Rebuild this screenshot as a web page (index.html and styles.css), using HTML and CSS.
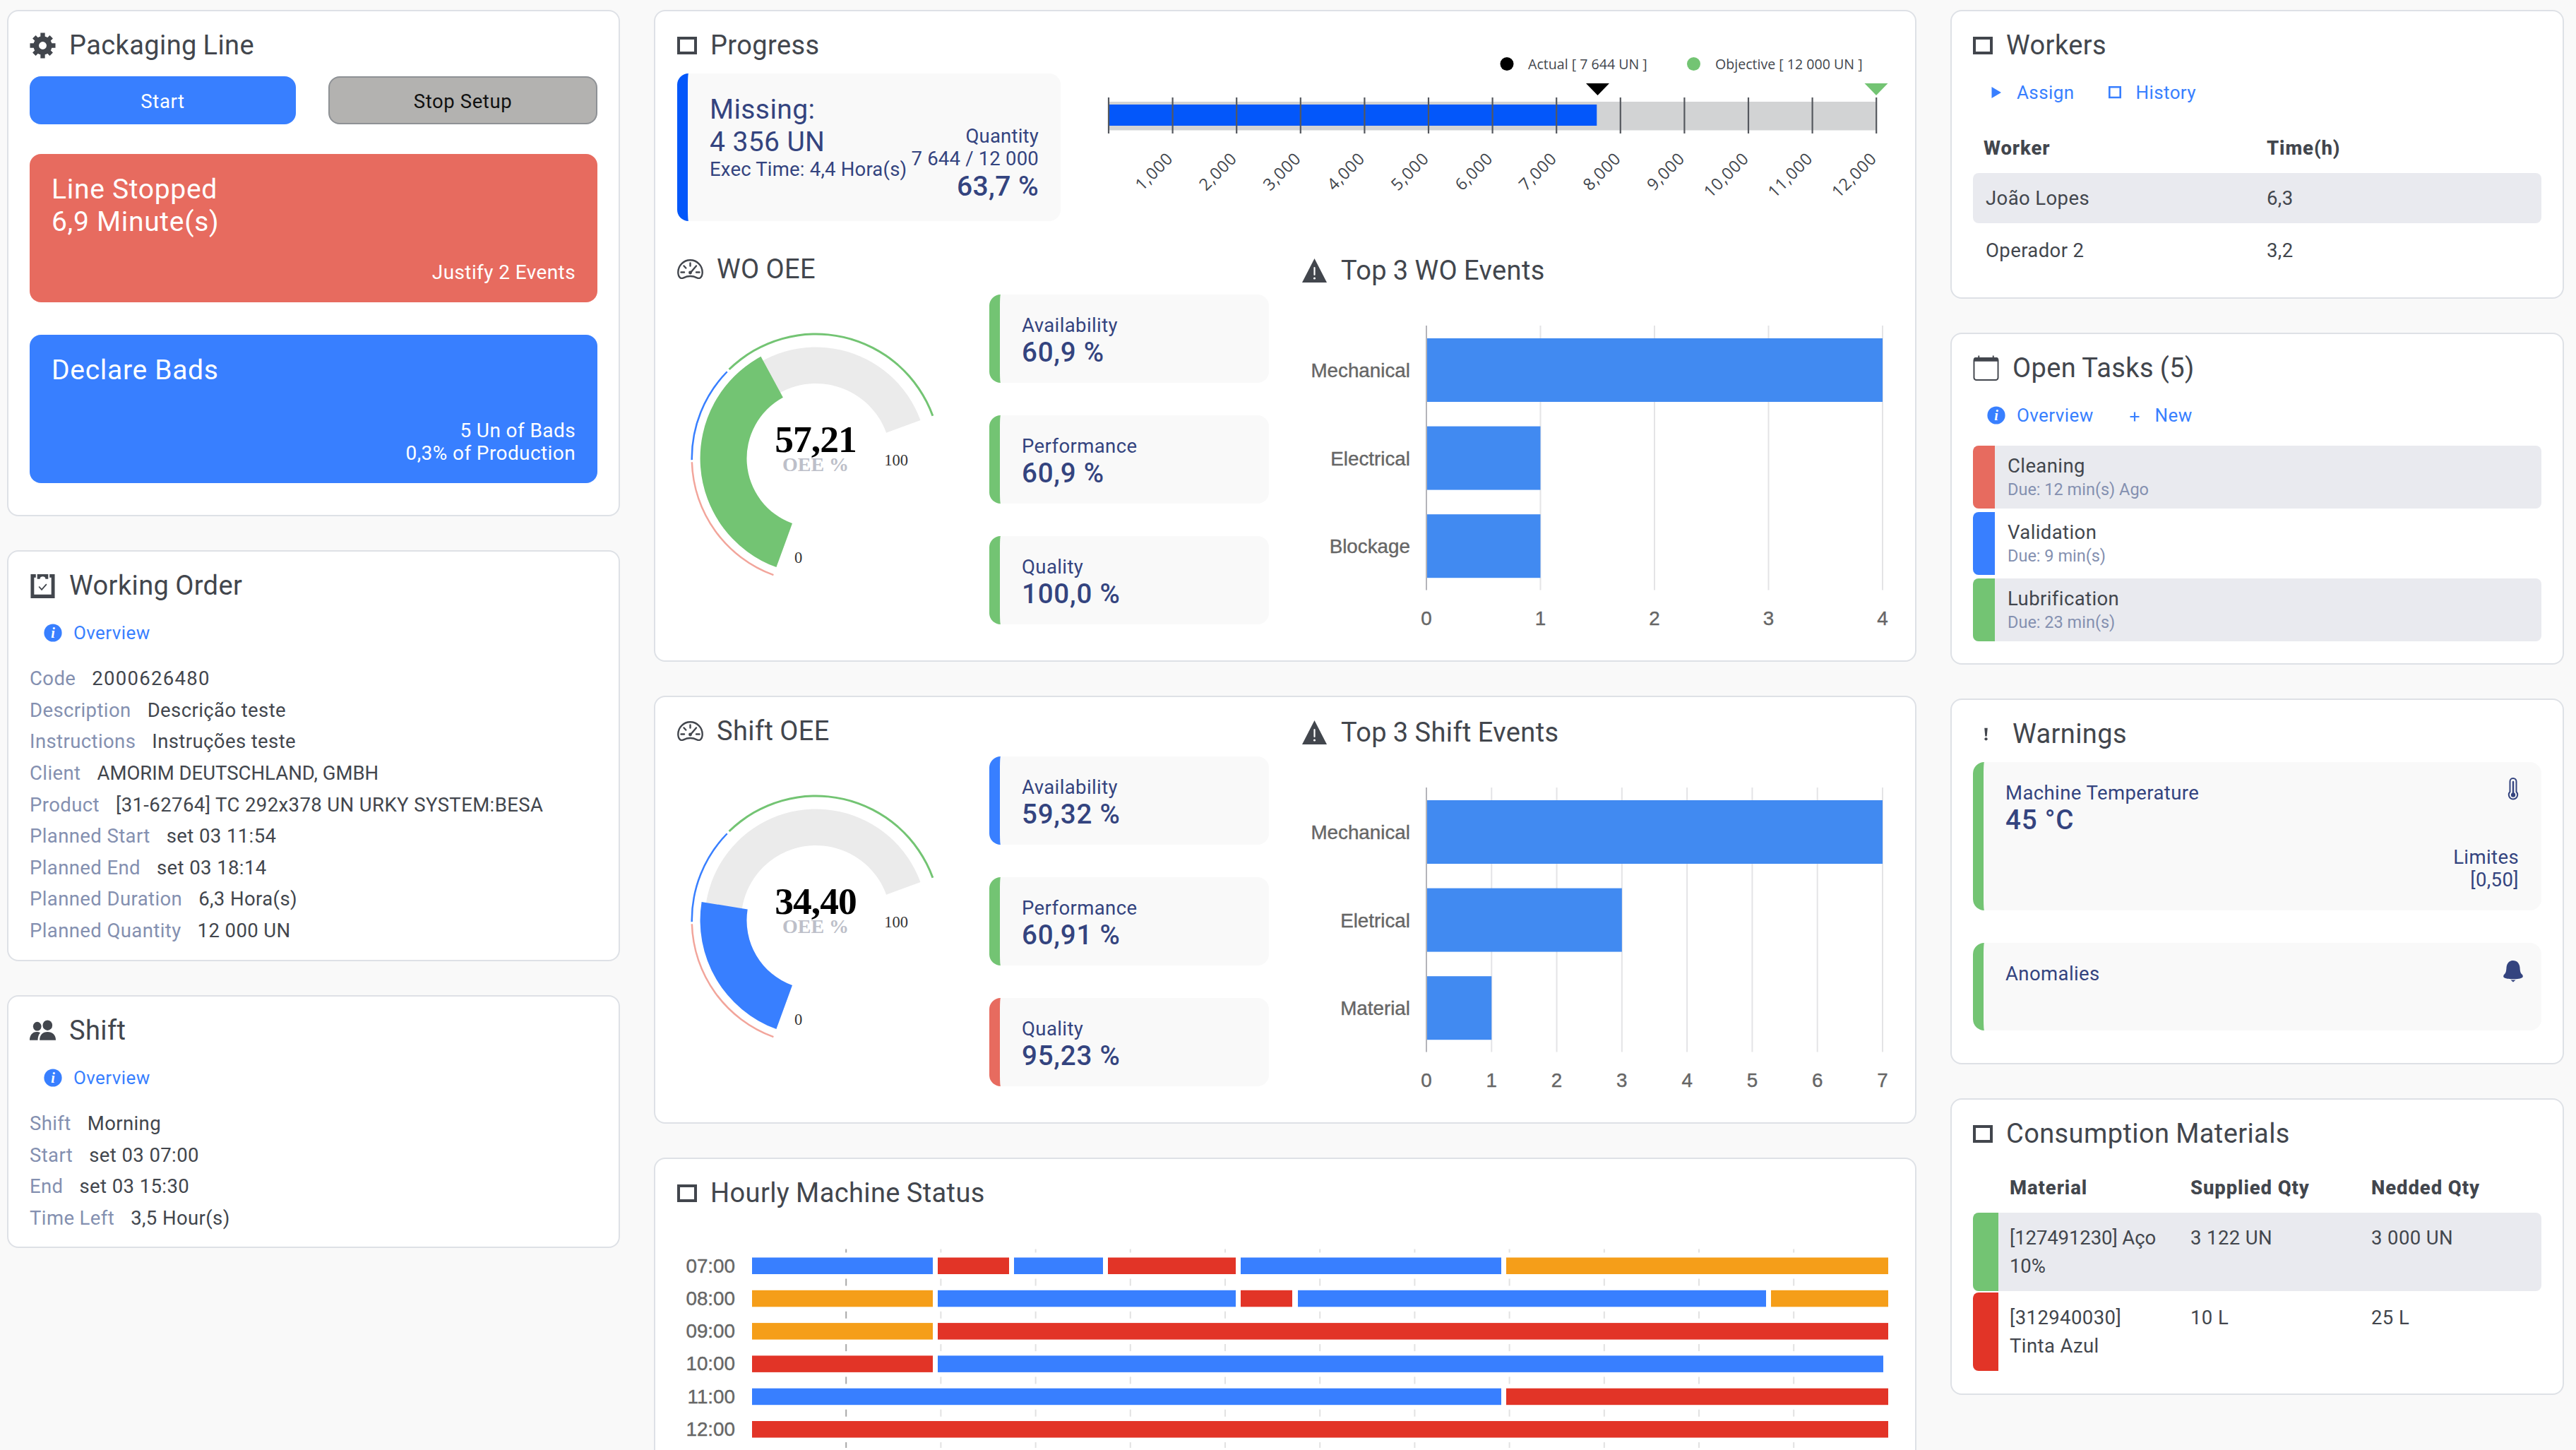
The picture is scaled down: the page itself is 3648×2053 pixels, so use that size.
FILE: index.html
```html
<!DOCTYPE html>
<html lang="en">
<head>
    <meta charset="UTF-8">
    <meta name="viewport" content="width=device-width, initial-scale=1.0">
    <title>Packaging Line</title>
    <link rel="stylesheet" href="styles.css">
</head>
<body>
    <!-- shared icons -->
    <svg class="sprite">
        <symbol id="i-info" viewBox="0 0 26 26">
            <circle cx="13" cy="13" r="12.6" fill="currentColor"/>
            <text class="info-i" x="13" y="20" text-anchor="middle">i</text>
        </symbol>
        <symbol id="i-gauge" viewBox="0 0 37 28">
            <path d="M4.500 26.500C2.500 25 1.300 22 1.300 18.500 1.300 9 9 1.300 18.500 1.300S35.700 9 35.700 18.500c0 3.500-1.200 6.500-3.200 8-1.500.8-3 .6-4.500-.2-6-2.900-13-2.900-19 0-1.500.8-3 1-4.500.2z" fill="none" stroke="currentColor" stroke-width="2.400"/>
            <path d="M18.500 5.500v4M9.500 9.500l2.800 3M5.500 18.500h4.500M27 18.500h4.500M27 9.500l-8.500 10" fill="none" stroke="currentColor" stroke-width="2.400" stroke-linecap="round"/>
            <circle cx="18.500" cy="19" r="2.400" fill="currentColor"/>
        </symbol>
        <symbol id="i-warn" viewBox="0 0 37 34">
            <path d="M18.500 0L36 34H1z" fill="currentColor"/>
            <path d="M18.500 13v10" stroke="#fff" stroke-width="2.200" stroke-linecap="round"/>
            <circle cx="18.500" cy="28" r="1.600" fill="#fff"/>
        </symbol>
    </svg>

    <div class="dashboard">
        <div class="column">
            <section class="card card-line">
                <h2 class="card-title">
                    <svg class="icon" viewBox="0 0 38 38">
                        <g stroke="currentColor" stroke-width="6.500">
                            <path d="M19 .5v37M.5 19h37M6.500 6.500l25 25M31.500 6.500l-25 25"/>
                        </g>
                        <circle cx="19" cy="19" r="13.500" fill="currentColor"/>
                        <circle cx="19" cy="19" r="5.600" fill="#fff"/>
                    </svg>
                    Packaging Line
                </h2>
                <div class="buttons">
                    <button class="btn btn-start">Start</button>
                    <button class="btn btn-stop">Stop Setup</button>
                </div>
                <div class="tile tile-red">
                    <p class="tile-big">Line Stopped<br>6,9 Minute(s)</p>
                    <p class="tile-small">Justify 2 Events</p>
                </div>
                <div class="tile tile-blue">
                    <p class="tile-big">Declare Bads</p>
                    <p class="tile-small">5 Un of Bads<br>0,3% of Production</p>
                </div>
            </section>

            <section class="card card-order">
                <h2 class="card-title">
                    <svg class="icon" viewBox="0 0 38 38">
                        <path d="M1.500 2H9v5H6.500v24.500h25V7H29V2h7.500v35h-35z" fill="currentColor"/>
                        <path d="M11 2h16v7h-4c0-2.500-2-3.500-4-3.500s-4 1-4 3.500h-4z" fill="currentColor"/>
                        <path d="M13.500 20l4 4.500 7-8" fill="none" stroke="currentColor" stroke-width="1.800"/>
                    </svg>
                    Working Order
                </h2>
                <div class="links">
                    <a class="link"><svg class="link-icon"><use href="#i-info"/></svg>Overview</a>
                </div>
                <dl class="details">
                    <div><dt>Code</dt><dd class="digits">2000626480</dd></div>
                    <div><dt>Description</dt><dd>Descrição teste</dd></div>
                    <div><dt>Instructions</dt><dd>Instruções teste</dd></div>
                    <div><dt>Client</dt><dd class="tight">AMORIM DEUTSCHLAND, GMBH</dd></div>
                    <div><dt>Product</dt><dd>[31-62764] TC 292x378 UN URKY SYSTEM:BESA</dd></div>
                    <div><dt>Planned Start</dt><dd>set 03 11:54</dd></div>
                    <div><dt>Planned End</dt><dd>set 03 18:14</dd></div>
                    <div><dt>Planned Duration</dt><dd>6,3 Hora(s)</dd></div>
                    <div><dt>Planned Quantity</dt><dd>12 000 UN</dd></div>
                </dl>
            </section>

            <section class="card card-shift">
                <h2 class="card-title">
                    <svg class="icon" viewBox="0 0 38 38">
                        <g fill="currentColor">
                            <ellipse cx="11" cy="12.500" rx="6" ry="6.500"/>
                            <path d="M0 32.500c0-7 4-12 10-12 2.500 0 4 .4 5.500 1.200-2.600 2.600-3.600 6.500-3.700 10.800z"/>
                            <ellipse cx="26" cy="11" rx="7" ry="7.500"/>
                            <path d="M14.500 32.500c0-7.500 4.500-12 11.500-12s12 4.500 12 12z"/>
                        </g>
                    </svg>
                    Shift
                </h2>
                <div class="links">
                    <a class="link"><svg class="link-icon"><use href="#i-info"/></svg>Overview</a>
                </div>
                <dl class="details">
                    <div><dt>Shift</dt><dd>Morning</dd></div>
                    <div><dt>Start</dt><dd>set 03 07:00</dd></div>
                    <div><dt>End</dt><dd>set 03 15:30</dd></div>
                    <div><dt>Time Left</dt><dd>3,5 Hour(s)</dd></div>
                </dl>
            </section>
        </div>

        <div class="column column-main">
            <section class="card card-progress">
                <div class="progress">
                    <div>
                        <h2 class="card-title"><span class="square"></span>Progress</h2>
                        <div class="box box-missing">
                            <div>
                                <p class="box-big">Missing:</p>
                                <p class="box-big">4 356 UN</p>
                                <p class="box-label">Exec Time: 4,4 Hora(s)</p>
                            </div>
                            <div class="box-right">
                                <p class="box-label">Quantity</p>
                                <p class="box-label">7 644 / 12 000</p>
                                <p class="box-big medium">63,7 %</p>
                            </div>
                        </div>
                    </div>
                    <svg class="bullet" id="bullet" width="1180" height="290"></svg>
                </div>
                <div class="oee">
                    <div class="oee-left">
                        <h2 class="card-title"><svg class="icon icon-gauge"><use href="#i-gauge"/></svg>WO OEE</h2>
                        <div class="oee-body">
                            <svg class="gauge" id="gaugeWo" width="400" height="440"></svg>
                            <div class="kpis">
                                <div class="box kpi green"><p class="box-label">Availability</p><p class="kpi-value">60,9 %</p></div>
                                <div class="box kpi green"><p class="box-label">Performance</p><p class="kpi-value">60,9 %</p></div>
                                <div class="box kpi green"><p class="box-label">Quality</p><p class="kpi-value">100,0 %</p></div>
                            </div>
                        </div>
                    </div>
                    <div class="oee-right">
                        <h2 class="card-title"><svg class="icon icon-warn"><use href="#i-warn"/></svg>Top 3 WO Events</h2>
                        <svg class="events" id="eventsWo" width="837" height="500"></svg>
                    </div>
                </div>
            </section>

            <section class="card card-shift-oee">
                <div class="oee">
                    <div class="oee-left">
                        <h2 class="card-title"><svg class="icon icon-gauge"><use href="#i-gauge"/></svg>Shift OEE</h2>
                        <div class="oee-body">
                            <svg class="gauge" id="gaugeShift" width="400" height="440"></svg>
                            <div class="kpis">
                                <div class="box kpi blue"><p class="box-label">Availability</p><p class="kpi-value">59,32 %</p></div>
                                <div class="box kpi green"><p class="box-label">Performance</p><p class="kpi-value">60,91 %</p></div>
                                <div class="box kpi red"><p class="box-label">Quality</p><p class="kpi-value">95,23 %</p></div>
                            </div>
                        </div>
                    </div>
                    <div class="oee-right">
                        <h2 class="card-title"><svg class="icon icon-warn"><use href="#i-warn"/></svg>Top 3 Shift Events</h2>
                        <svg class="events" id="eventsShift" width="837" height="500"></svg>
                    </div>
                </div>
            </section>

            <section class="card card-hourly">
                <h2 class="card-title"><span class="square"></span>Hourly Machine Status</h2>
                <svg id="hourly" width="1722" height="338"></svg>
            </section>
        </div>

        <div class="column">
            <section class="card card-workers">
                <h2 class="card-title"><span class="square"></span>Workers</h2>
                <div class="links">
                    <a class="link"><svg class="link-icon" viewBox="0 0 26 26"><path d="M6.500 5l13.500 8-13.500 8z" fill="currentColor"/></svg>Assign</a>
                    <a class="link"><svg class="link-icon" viewBox="0 0 26 26"><path d="M5.300 5.300h15.400v14.700H5.300z" fill="none" stroke="currentColor" stroke-width="2.600"/></svg>History</a>
                </div>
                <div class="workers-head"><b>Worker</b><b>Time(h)</b></div>
                <div class="workers-row striped"><span>João Lopes</span><span>6,3</span></div>
                <div class="workers-row"><span>Operador 2</span><span>3,2</span></div>
            </section>

            <section class="card card-tasks">
                <h2 class="card-title">
                    <svg class="icon" viewBox="0 0 38 38">
                        <rect x="1.500" y="4" width="35" height="32" rx="3.500" fill="none" stroke="currentColor" stroke-width="2"/>
                        <path d="M1 9V6c0-2 1-3 3-3h3.500V.5h2V3h19V.5h2V3H34c2 0 3 1 3 3v3z" fill="currentColor"/>
                    </svg>
                    Open Tasks (5)
                </h2>
                <div class="links">
                    <a class="link"><svg class="link-icon"><use href="#i-info"/></svg>Overview</a>
                    <a class="link"><svg class="link-icon" viewBox="0 0 26 26"><path d="M13 8.500v13M6.500 15h13" stroke="currentColor" stroke-width="2.200"/></svg>New</a>
                </div>
                <div class="tasks">
                    <div class="task striped"><i class="flag red"></i><div><p>Cleaning</p><p class="due">Due: 12 min(s) Ago</p></div></div>
                    <div class="task"><i class="flag blue"></i><div><p>Validation</p><p class="due">Due: 9 min(s)</p></div></div>
                    <div class="task striped"><i class="flag green"></i><div><p>Lubrification</p><p class="due">Due: 23 min(s)</p></div></div>
                </div>
            </section>

            <section class="card card-warnings">
                <h2 class="card-title">
                    <svg class="icon" viewBox="0 0 38 38">
                        <path d="M16.700 10h4.600l-1.100 12h-2.400z" fill="currentColor"/>
                        <circle cx="19" cy="26" r="2.200" fill="currentColor"/>
                    </svg>
                    Warnings
                </h2>
                <div class="box warning green">
                    <div class="warning-head">
                        <div><p class="box-label">Machine Temperature</p><p class="kpi-value">45 °C</p></div>
                        <svg class="warning-icon" viewBox="0 0 28 32">
                            <path d="M9.500 20V5.500a4.500 4.500 0 0 1 9 0V20a6.200 6.200 0 1 1-9 0z" fill="none" stroke="currentColor" stroke-width="2"/>
                            <path d="M14 6v18" stroke="currentColor" stroke-width="2.400" stroke-linecap="round"/>
                            <circle cx="14" cy="24.500" r="3.200" fill="currentColor"/>
                        </svg>
                    </div>
                    <p class="box-label limits">Limites<br>[0,50]</p>
                </div>
                <div class="box warning anomalies green">
                    <div class="warning-head">
                        <p class="box-label">Anomalies</p>
                        <svg class="warning-icon" viewBox="0 0 28 32">
                            <path d="M14 1c5.500 0 9 4 9.500 10 .3 5 .8 7.500 3 9.500 1.500 1.500 1.800 3.500.5 4.500-2 1.600-7 2.300-13 2.300S3 26.600 1 25c-1.300-1-1-3 .5-4.500 2.200-2 2.700-4.500 3-9.500C5 5 8.500 1 14 1z" fill="currentColor"/>
                            <path d="M10.500 28.500h7L14 31.500z" fill="currentColor"/>
                        </svg>
                    </div>
                </div>
            </section>

            <section class="card card-materials">
                <h2 class="card-title"><span class="square"></span>Consumption Materials</h2>
                <div class="materials-head"><b>Material</b><b>Supplied Qty</b><b>Nedded Qty</b></div>
                <div class="material striped">
                    <i class="flag green"></i>
                    <span class="tight">[127491230] Aço<br>10%</span><span>3 122 UN</span><span>3 000 UN</span>
                </div>
                <div class="material">
                    <i class="flag danger"></i>
                    <span>[312940030]<br>Tinta Azul</span><span>10 L</span><span>25 L</span>
                </div>
            </section>
        </div>
    </div>

    <script src="charts.js"></script>
</body>
</html>
```

FILE: styles.css
```css
* {
    margin: 0;
    padding: 0;
    box-sizing: border-box;
}

body {
    height: 2053px;
    overflow: hidden;
    background: #f9f9f9;
    color: #42464d;
    font-family: Roboto, 'Liberation Sans', sans-serif;
    font-size: 27.5px;
    letter-spacing: 0.4px;
}

.sprite { display: none; }

.info-i {
    font: italic bold 20px 'Liberation Serif', serif;
    letter-spacing: 0;
    fill: #fff;
}

/* layout */
.dashboard {
    display: grid;
    grid-template-columns: 868px 1788px 869px;
    column-gap: 48px;
    padding: 14px 0 0 10px;
}

.column {
    display: flex;
    flex-direction: column;
    gap: 48px;
}

.card {
    background: #fff;
    border: 2px solid #dee1e6;
    border-radius: 16px;
    padding: 25px 30px 0;
}

.column-main .card {
    padding: 25px 31px 0;
}

.card-line { height: 717px; }
.card-order { height: 582px; }
.card-shift { height: 358px; }
.card-progress { height: 923px; }
.card-shift-oee { height: 606px; }
.card-workers { height: 409px; }
.card-tasks { height: 470px; }
.card-warnings { height: 518px; }
.card-materials { height: 420px; }

/* runs down to the bottom of the screen */
.column-main .card-hourly {
    height: 414px;
    border-bottom: none;
    border-radius: 16px 16px 0 0;
}

.card-title {
    display: flex;
    align-items: center;
    gap: 19px;
    height: 46px;
    font-size: 38px;
    font-weight: 400;
    letter-spacing: 0.4px;
    word-spacing: -1px;
    line-height: 46px;
    white-space: nowrap;
}

.icon {
    flex: none;
    width: 37px;
    height: 37px;
}

.icon-gauge { height: 28px; }

.icon-warn {
    height: 34px;
    margin-left: -1px;
}

.square {
    width: 28px;
    height: 25px;
    border: 4px solid #42464d;
}

/* packaging line */
.buttons {
    display: flex;
    gap: 46px;
    margin: 21px 0 42px;
}

.btn {
    flex: 1;
    height: 68px;
    padding-top: 2px;
    border: none;
    border-radius: 16px;
    font: inherit;
    letter-spacing: 0.6px;
}

.btn-start {
    background: #387fff;
    color: #fff;
}

.btn-stop {
    background: #b3b2b0;
    border: 2px solid #8e9195;
    color: #111;
}

.tile {
    display: flex;
    flex-direction: column;
    justify-content: space-between;
    height: 210px;
    padding: 27px 31px 26px;
    border-radius: 16px;
    color: #fff;
}

.tile + .tile { margin-top: 46px; }
.tile-red { background: #e76b5f; }
.tile-blue { background: #387fff; }

.tile-big {
    font-size: 39px;
    letter-spacing: 0.7px;
    line-height: 46px;
}

.tile-small {
    font-size: 28px;
    line-height: 32px;
    text-align: right;
}

/* links row */
.links {
    display: flex;
    gap: 45px;
    height: 40px;
    margin-top: 24px;
    padding-left: 20px;
}

.link {
    display: flex;
    align-items: center;
    gap: 16px;
    color: #387fff;
    font-size: 26px;
    line-height: 40px;
}

.link-icon {
    width: 26px;
    height: 26px;
}

.details { margin-top: 23px; }

.details div {
    display: flex;
    gap: 23px;
    height: 44.65px;
    line-height: 44.65px;
    white-space: nowrap;
}

.details dt { color: #8490b0; }
.details .digits { letter-spacing: 1.3px; }
.details .tight { letter-spacing: 0; }

/* boxes with the coloured left edge */
.box {
    background: #f9f9f9;
    border-left: 15px solid #73c473;
    border-radius: 16px;
    color: #34447f;
    white-space: nowrap;
}

.box.blue { border-color: #387fff; }
.box.green { border-color: #73c473; }
.box.red { border-color: #e76b5f; }

.box-label { line-height: 32px; }

.box-big {
    font-size: 39px;
    line-height: 46px;
}

.box-big.medium { font-weight: 500; }

.progress {
    display: grid;
    grid-template-columns: 543px 1180px;
    height: 290px;
}

.box-missing {
    display: flex;
    justify-content: space-between;
    height: 209px;
    margin-top: 17px;
    padding: 28px 31px 0 31px;
    border-color: #0357fa;
}

.box-missing .box-label { letter-spacing: 0.2px; }

.box-right {
    padding-top: 45px;
    text-align: right;
}

.oee {
    display: grid;
    grid-template-columns: 838px 837px;
    column-gap: 47px;
}

.card-progress .oee { margin-top: 27px; }

.oee-right { padding-top: 2px; }

.oee-body {
    display: flex;
    justify-content: space-between;
}

.kpis {
    display: flex;
    flex-direction: column;
    gap: 46px;
    width: 396px;
    padding-top: 13px;
}

.kpi {
    height: 125px;
    padding: 28px 0 0 31px;
}

.kpi-value {
    margin-top: 2px;
    font-size: 38.5px;
    font-weight: 500;
    letter-spacing: 0.8px;
    line-height: 40px;
}

/* chart text */
.legend-text, .tick-text {
    font-family: 'Open Sans', sans-serif;
    letter-spacing: 0;
    fill: #42464d;
}

.legend-text { font-size: 19.6px; }

.tick-text {
    font-size: 23.5px;
    letter-spacing: 0.8px;
}

.axis-text {
    font-family: 'Liberation Sans', sans-serif;
    font-size: 27.8px;
    letter-spacing: 0;
    fill: #666;
    stroke: #666;
    stroke-width: 0.4px;
}

.gauge text {
    font-family: 'Liberation Serif', serif;
    letter-spacing: 0;
}

.gauge .gauge-value {
    font-size: 53.5px;
    font-weight: 700;
    letter-spacing: -1px;
    fill: #000;
}

.gauge-unit {
    font-size: 28px;
    font-weight: 700;
    fill: #bdbfc9;
}

.gauge-mark {
    font-size: 22.5px;
    fill: #333;
}

/* workers */
.striped { background: #e9eaef; }

.workers-head b, .materials-head b {
    font-weight: 800;
    letter-spacing: 0.9px;
}

.workers-head, .workers-row {
    display: grid;
    grid-template-columns: 398px 1fr;
    border-radius: 8px;
}

.workers-head {
    grid-template-columns: 401px 1fr;
    margin: 39px 0 15px;
    padding-left: 15px;
    line-height: 40px;
}

.workers-row {
    height: 71px;
    margin-bottom: 3px;
    padding: 1px 0 0 18px;
    line-height: 70px;
}

/* tasks */
.tasks {
    display: flex;
    flex-direction: column;
    gap: 5px;
    margin-top: 23px;
}

.task {
    display: flex;
    gap: 18px;
    height: 89px;
    border-radius: 8px;
    overflow: hidden;
}

.task p { line-height: 34px; }
.task div { padding-top: 12px; }

.task .due {
    color: #8490b0;
    font-size: 23.5px;
    letter-spacing: 0;
    line-height: 32px;
}

.flag { width: 31px; }
.flag.red { background: #e76b5f; }
.flag.blue { background: #387fff; }
.flag.green { background: #73c473; }
.flag.danger { background: #e23427; }

/* warnings */
.warning {
    display: flex;
    flex-direction: column;
    justify-content: space-between;
    height: 210px;
    margin-top: 17px;
    padding: 28px 32px 27px 31px;
}

.warning.anomalies {
    height: 124px;
    margin-top: 46px;
}

.warning-head {
    display: flex;
    justify-content: space-between;
}

.warning-icon {
    width: 28px;
    height: 32px;
    margin: -6px -6px 0 0;
}

.anomalies .warning-icon { margin-top: -4px; }

.limits { text-align: right; }

/* materials */
.materials-head, .material {
    display: grid;
    grid-template-columns: 36px 256px 256px 1fr;
    line-height: 40px;
}

.materials-head {
    grid-template-columns: 256px 256px 1fr;
    margin: 34px 0 15px;
    padding-left: 52px;
}

.material {
    height: 111px;
    margin-bottom: 2px;
    border-radius: 8px;
    overflow: hidden;
}

.material .flag { width: 36px; }
.material span { padding: 16px 0 0 16px; }
.material .tight { letter-spacing: -0.1px; }
```

FILE: charts.js
```js
const GREEN = '#73c473';
const BLUE = '#387fff';
const RED = '#e23427';
const ORANGE = '#f59e19';

function line(x1, y1, x2, y2, color, width = 2) {
    return `<line x1="${x1}" y1="${y1}" x2="${x2}" y2="${y2}" stroke="${color}" stroke-width="${width}"/>`;
}

function rect(x, y, w, h, color) {
    return `<rect x="${x}" y="${y}" width="${w}" height="${h}" fill="${color}"/>`;
}

function text(x, y, cls, label, anchor = 'start', extra = '') {
    return `<text x="${x}" y="${y}" class="${cls}" text-anchor="${anchor}" ${extra}>${label}</text>`;
}

// progress bullet chart
function drawBullet() {
    const x0 = 68, step = 90.6, max = 12;
    let out = rect(x0, 103, step * max, 40.5, '#d2d3d4');
    out += rect(x0, 107, step * 7.63, 30, '#0357fa');
    for (let i = 0; i <= max; i++) {
        const x = x0 + step * i;
        out += line(x, 97, x, 148, '#55585e', 2.2);
        if (i > 0) {
            out += text(x + 2, 185, 'tick-text', i + ',000', 'end', `transform="rotate(-45 ${x + 2} 185)"`);
        }
    }
    out += '<circle cx="632" cy="49.5" r="9.5" fill="#000"/>' + text(662, 57, 'legend-text', 'Actual [ 7 644 UN ]');
    out += `<circle cx="896.5" cy="49.5" r="9.5" fill="${GREEN}"/>` + text(927, 57, 'legend-text', 'Objective [ 12 000 UN ]');
    out += '<path d="M744 77h33l-16.500 17z" fill="#000"/>';
    out += `<path d="M1138.500 77h33l-16.500 17z" fill="${GREEN}"/>`;
    document.getElementById('bullet').innerHTML = out;
}

// OEE gauge, from 110 to 340 degrees clockwise
const CX = 196.5, CY = 245;

function point(r, deg) {
    const a = deg * Math.PI / 180;
    return (CX + r * Math.cos(a)).toFixed(1) + ' ' + (CY + r * Math.sin(a)).toFixed(1);
}

function band(r1, r2, from, to, color) {
    const large = to - from > 180 ? 1 : 0;
    return `<path d="M${point(r2, from)}A${r2} ${r2} 0 ${large} 1 ${point(r2, to)}L${point(r1, to)}A${r1} ${r1} 0 ${large} 0 ${point(r1, from)}z" fill="${color}"/>`;
}

function drawGauge(id, value, label, color) {
    const end = 110 + 230 * value / 100;
    let out = band(106, 157.5, 110, 340, '#ebebeb');
    out += band(98, 164, 110, end, color);
    out += band(174.5, 177, 110, 178.3, '#f2a59b');
    out += band(174.5, 177, 179.3, 224.3, BLUE);
    out += band(174.5, 177.5, 225.7, 340, GREEN);
    out += text(196, 236, 'gauge-value', label, 'middle');
    out += text(196, 263, 'gauge-unit', 'OEE %', 'middle');
    out += text(310, 255, 'gauge-mark', '100', 'middle');
    out += text(171.5, 392.5, 'gauge-mark', '0', 'middle');
    document.getElementById(id).innerHTML = out;
}

// horizontal bars with the top events
function drawEvents(id, max, events) {
    const x0 = 176, width = 646, step = width / max;
    let out = '';
    for (let i = 0; i <= max; i++) {
        const x = x0 + step * i;
        out += line(x, 55, x, 429.5, i === 0 ? '#b4b4ba' : '#e4e4e6');
        out += text(x, 479, 'axis-text', i, 'middle');
    }
    events.forEach(([name, count], i) => {
        const y = 73 + i * 124.6;
        out += rect(x0 + 1, y, step * count - 1, 90, '#418af1');
        out += text(153, y + 55, 'axis-text', name, 'end');
    });
    document.getElementById(id).innerHTML = out;
}

// machine status per hour: [start, end, colour] in px along the hour
function drawHourly() {
    const hours = {
        '07:00': [[0, 256, BLUE], [263, 364, RED], [371, 497, BLUE], [504, 685, RED], [692, 1061, BLUE], [1068, 1609, ORANGE]],
        '08:00': [[0, 256, ORANGE], [263, 685, BLUE], [692, 765, RED], [773, 1436, BLUE], [1443, 1609, ORANGE]],
        '09:00': [[0, 256, ORANGE], [263, 1609, RED]],
        '10:00': [[0, 256, RED], [263, 1602, BLUE]],
        '11:00': [[0, 1061, BLUE], [1068, 1609, RED]],
        '12:00': [[0, 1609, RED]]
    };
    const x0 = 106;
    let out = '';
    Object.entries(hours).forEach(([hour, parts], row) => {
        const y = 68.5 + row * 46.3;
        for (let i = 1; i < 12; i++) {
            const x = x0 + i * 134.2 - 1;
            const color = i === 1 ? '#a8a8a8' : '#e2e2e2';
            if (row === 0) out += line(x, y - 12, x, y - 7, color);
            out += line(x, y + 30, x, y + 40, color);
        }
        out += text(82, y + 21, 'axis-text', hour, 'end');
        parts.forEach(([from, to, color]) => {
            out += rect(x0 + from, y, to - from, 23.5, color);
        });
    });
    document.getElementById('hourly').innerHTML = out;
}

drawBullet();
drawGauge('gaugeWo', 57.21, '57,21', GREEN);
drawGauge('gaugeShift', 34.4, '34,40', BLUE);
drawEvents('eventsWo', 4, [['Mechanical', 4], ['Electrical', 1], ['Blockage', 1]]);
drawEvents('eventsShift', 7, [['Mechanical', 7], ['Eletrical', 3], ['Material', 1]]);
drawHourly();
```
